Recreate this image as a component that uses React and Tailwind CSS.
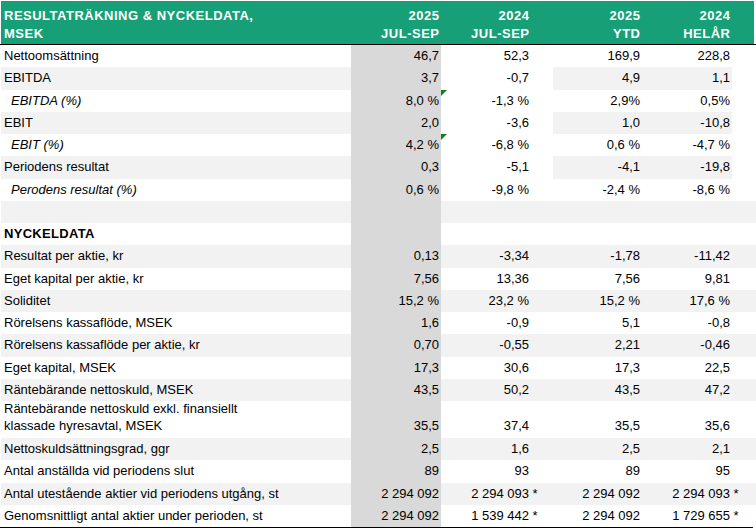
import React from "react";

const GRAY = "bg-[#f2f2f2]";
const COL = "bg-[#d9d9d9]";

const rows = [
  { label: "Nettoomsättning", v: ["46,7", "52,3", "169,9", "228,8"], bg: "w" },
  { label: "EBITDA", v: ["3,7", "-0,7", "4,9", "1,1"], bg: "a" },
  { label: "EBITDA (%)", v: ["8,0 %", "-1,3 %", "2,9%", "0,5%"], bg: "w", it: true, tri: true },
  { label: "EBIT", v: ["2,0", "-3,6", "1,0", "-10,8"], bg: "a" },
  { label: "EBIT (%)", v: ["4,2 %", "-6,8 %", "0,6 %", "-4,7 %"], bg: "w", it: true, tri: true },
  { label: "Periodens resultat", v: ["0,3", "-5,1", "-4,1", "-19,8"], bg: "a" },
  { label: "Perodens resultat (%)", v: ["0,6 %", "-9,8 %", "-2,4 %", "-8,6 %"], bg: "w", it: true },
  { label: "", v: ["", "", "", ""], bg: "b" },
  { label: "NYCKELDATA", v: ["", "", "", ""], bg: "w", bold: true },
  { label: "Resultat per aktie, kr", v: ["0,13", "-3,34", "-1,78", "-11,42"], bg: "b" },
  { label: "Eget kapital per aktie, kr", v: ["7,56", "13,36", "7,56", "9,81"], bg: "w" },
  { label: "Soliditet", v: ["15,2 %", "23,2 %", "15,2 %", "17,6 %"], bg: "b" },
  { label: "Rörelsens kassaflöde, MSEK", v: ["1,6", "-0,9", "5,1", "-0,8"], bg: "w" },
  { label: "Rörelsens kassaflöde per aktie, kr", v: ["0,70", "-0,55", "2,21", "-0,46"], bg: "b" },
  { label: "Eget kapital, MSEK", v: ["17,3", "30,6", "17,3", "22,5"], bg: "w" },
  { label: "Räntebärande nettoskuld, MSEK", v: ["43,5", "50,2", "43,5", "47,2"], bg: "b" },
  {
    label: (
      <>
        Räntebärande nettoskuld exkl. finansiellt
        <br />
        klassade hyresavtal, MSEK
      </>
    ),
    v: ["35,5", "37,4", "35,5", "35,6"],
    bg: "w",
    tall: true,
  },
  { label: "Nettoskuldsättningsgrad, ggr", v: ["2,5", "1,6", "2,5", "2,1"], bg: "b" },
  { label: "Antal anställda vid periodens slut", v: ["89", "93", "89", "95"], bg: "w" },
  {
    label: "Antal utestående aktier vid periodens utgång, st",
    v: ["2 294 092", "2 294 093", "2 294 092", "2 294 093"],
    star: [false, true, false, true],
    bg: "b",
  },
  {
    label: "Genomsnittligt antal aktier under perioden, st",
    v: ["2 294 092", "1 539 442", "2 294 092", "1 729 655"],
    star: [false, true, false, true],
    bg: "w",
  },
];

function Val({ text, star }) {
  if (!star) return <span className="whitespace-pre">{text}</span>;
  return (
    <span className="relative whitespace-pre">
      {text}
      <span className="absolute left-full top-0 whitespace-pre">{" *"}</span>
    </span>
  );
}

function Row({ r }) {
  const h = r.tall ? "h-[37px]" : "h-[22.25px]";
  const lbg = r.bg === "w" ? "bg-white" : GRAY;
  const c2 = r.bg === "b" ? GRAY : "bg-white";
  const c34 = r.bg === "w" ? "bg-white" : GRAY;
  const c5 = r.bg === "b" ? GRAY : "bg-white";
  const lh = r.tall ? "leading-[16.5px] pb-[4px] items-end" : "leading-[22.25px] items-center";
  const vAlign = r.tall ? "items-end pb-[4px] leading-[16.5px]" : "items-center leading-[22.25px]";
  const star = r.star || [false, false, false, false];
  return (
    <div className={`flex ${h}`}>
      <div
        className={`w-[350px] flex ${lh} ${lbg} ${r.it ? "pl-[10px] italic" : "pl-[3px]"} ${
          r.bold ? "font-bold tracking-[0.3px]" : ""
        }`}
      >
        <span>{r.label}</span>
      </div>
      <div className={`w-[90px] flex justify-end pr-[2px] ${vAlign} ${COL}`}>
        <Val text={r.v[0]} star={star[0]} />
      </div>
      <div className={`relative w-[112px] flex justify-end pr-[24px] ${vAlign} ${c2}`}>
        {r.tri && (
          <svg className="absolute left-0 top-0" width="6" height="6" viewBox="0 0 6 6">
            <polygon points="0,0 6,0 0,6" fill="#13801a" />
          </svg>
        )}
        <Val text={r.v[1]} star={star[1]} />
      </div>
      <div className={`w-[90px] flex justify-end pr-[3px] ${vAlign} ${c34}`}>
        <Val text={r.v[2]} star={star[2]} />
      </div>
      <div className={`w-[89px] flex justify-end pr-[2px] ${vAlign} ${c34}`}>
        <Val text={r.v[3]} star={star[3]} />
      </div>
      <div className={`flex-1 ${c5}`} />
    </div>
  );
}

export default function App() {
  return (
    <div
      className="w-[756px] h-[530px] bg-white text-black text-[13px] overflow-hidden"
      style={{ fontFamily: '"Liberation Sans", Arial, sans-serif' }}
    >
      <div className="pt-[1px] pl-[1px]">
        <div className="flex h-[43px] w-[753px] bg-[#17a077] text-white font-bold tracking-[0.5px] leading-[18.5px] pb-[0.5px]">
          <div className="w-[350px] flex items-end pl-[3px]">
            <span>
              RESULTATRÄKNING &amp; NYCKELDATA,
              <br />
              MSEK
            </span>
          </div>
          <div className="w-[90px] flex items-end justify-end text-right pr-[1.5px]">
            <span>
              2025
              <br />
              JUL-SEP
            </span>
          </div>
          <div className="w-[112px] flex items-end justify-end text-right pr-[23.5px]">
            <span>
              2024
              <br />
              JUL-SEP
            </span>
          </div>
          <div className="w-[90px] flex items-end justify-end text-right pr-[2.5px]">
            <span>
              2025
              <br />
              YTD
            </span>
          </div>
          <div className="w-[89px] flex items-end justify-end text-right pr-[1.5px]">
            <span>
              2024
              <br />
              HELÅR
            </span>
          </div>
        </div>
      </div>
      <div className="h-px bg-black w-[756px]" />
      <div className="pl-[1px]">
        {rows.map((r, i) => (
          <Row key={i} r={r} />
        ))}
      </div>
      <div className="h-px bg-black w-[753px]" />
    </div>
  );
}
